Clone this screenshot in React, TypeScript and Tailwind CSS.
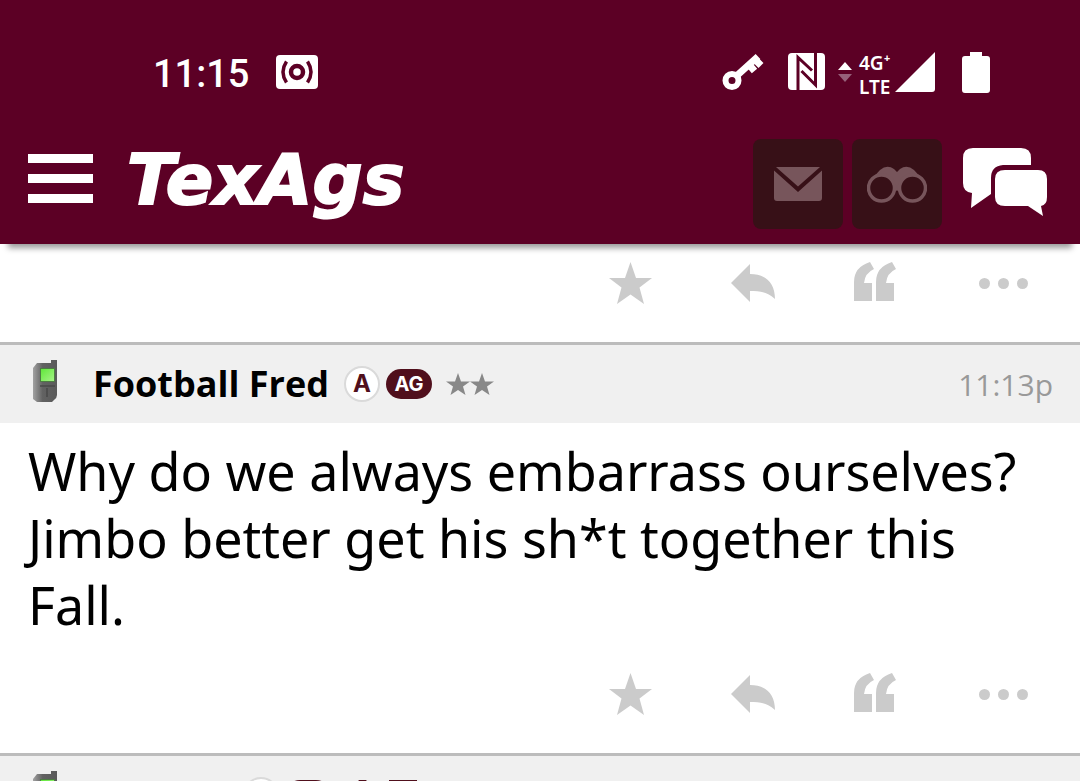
import type { ReactNode } from "react";

function HeaderTile({ label, children }: { label: string; children: ReactNode }) {
  return (
    <button
      type="button"
      aria-label={label}
      className="flex size-[90px] items-center justify-center rounded-lg bg-[#371017] text-[#77555b]"
    >
      {children}
    </button>
  );
}

function StatusBar() {
  return (
    <div className="flex h-[110px] items-end justify-between pr-[90px] pb-[14px] pl-[153px] text-white">
      <div className="flex h-[48px] items-center gap-[27px]">
        <span className="pt-1 font-[Roboto,sans-serif] text-[38px] leading-[44px] font-medium">
          11:15
        </span>
        <svg width="42" height="34" viewBox="0 0 42 34" fill="none" aria-hidden="true">
          <rect width="42" height="34" rx="4" fill="currentColor" />
          <circle cx="21" cy="17" r="6" stroke="#5c0025" strokeWidth="4.5" />
          <path
            d="M10.5 6.5Q3.500 17 10.500 27.500M31.500 6.500Q38.500 17 31.500 27.500"
            stroke="#5c0025"
            strokeWidth="3.5"
          />
        </svg>
      </div>

      <div className="flex h-[48px] items-center">
        <svg width="42" height="38" viewBox="0 0 42 38" fill="none" aria-hidden="true">
          <circle cx="10" cy="27.5" r="6.5" stroke="currentColor" strokeWidth="6" />
          <path
            d="M15 22.500L36 3.500M27 11.500l5.500 6.500M33 6.500l6 6"
            stroke="currentColor"
            strokeWidth="7"
          />
        </svg>
        <svg className="ml-[24px]" width="38" height="38" viewBox="0 0 38 38" aria-hidden="true">
          <rect width="37" height="37" rx="4" fill="currentColor" />
          <path
            d="M10 37V4.500L24 17.500M27.500 0V32L13.500 18"
            fill="none"
            stroke="#5c0025"
            strokeWidth="3"
          />
        </svg>
        <svg className="ml-[12px]" width="14" height="20" viewBox="0 0 14 20" aria-hidden="true">
          <path fill="currentColor" d="M7 0L14 8H0Z" />
          <path fill="#96607a" d="M0 12H14L7 20Z" />
        </svg>
        <div className="ml-[7px] w-[36px] pt-1.5 font-['Noto_Sans',sans-serif] text-[19px] leading-[24px] font-semibold">
          <div>4G⁺</div>
          <div>LTE</div>
        </div>
        <svg width="40" height="40" viewBox="0 0 40 40" aria-hidden="true">
          <path fill="currentColor" d="M40 0V37Q40 40 37 40H0Z" />
        </svg>
        <svg className="ml-[27px]" width="28" height="41" viewBox="0 0 28 41" aria-hidden="true">
          <path
            fill="currentColor"
            d="M8 0H20V4H25Q28 4 28 7V38Q28 41 25 41H3Q0 41 0 38V7Q0 4 3 4H8Z"
          />
        </svg>
      </div>
    </div>
  );
}

function SiteHeader() {
  return (
    <header className="relative z-10 shrink-0 bg-[#5c0025] shadow-[0_12px_6px_-8px_rgba(0,0,0,0.4)]">
      <StatusBar />
      <div className="flex h-[134px] items-center pt-[14px] pr-[33px] pl-7 text-white">
        <button type="button" aria-label="Menu" className="mb-3 flex flex-col gap-[11px]">
          <span className="h-[9px] w-[65px] bg-white" />
          <span className="h-[9px] w-[65px] bg-white" />
          <span className="h-[9px] w-[65px] bg-white" />
        </button>
        <a
          href="#"
          className="mb-2 ml-[34px] font-['DejaVu_Sans',sans-serif] text-[70px] leading-[80px] font-bold italic [-webkit-text-stroke:2px_white]"
        >
          TexAgs
        </a>
        <nav className="ml-auto flex items-center gap-[9px]">
          <HeaderTile label="Messages">
            <svg width="48" height="34" viewBox="0 0 48 34" fill="currentColor">
              <path d="M2 0H46L24 19.500Z" />
              <path d="M0 3.500L24 25L48 3.500V31Q48 34 45 34H3Q0 34 0 31Z" />
            </svg>
          </HeaderTile>
          <HeaderTile label="Watched topics">
            <svg width="60" height="37" viewBox="0 0 60 37">
              <path
                fill="currentColor"
                d="M3 15L13 4Q20 -2 27 3L30 6L33 3Q40 -2 47 4L57 15L44 26L33 26Q30 23 27 26L16 26Z"
              />
              <g fill="#371017" stroke="currentColor" strokeWidth="3.500">
                <circle cx="14.500" cy="22" r="13" />
                <circle cx="45.500" cy="22" r="13" />
              </g>
            </svg>
          </HeaderTile>
          <button type="button" aria-label="Forums" className="mb-1 ml-3">
            <svg width="84" height="69" viewBox="0 0 84 69" fill="currentColor">
              <path d="M10 0H58Q68 0 68 10V17H40Q28 18 28 30V46L8 60L9 45Q0 44 0 35V10Q0 0 10 0Z" />
              <path d="M42 22H75Q84 22 84 31V49Q84 57 78 58L80 68L65 58H42Q32 58 32 49V31Q32 22 42 22Z" />
            </svg>
          </button>
        </nav>
      </div>
    </header>
  );
}

function PostActions() {
  return (
    <div className="flex h-11 items-center justify-end gap-[79px] pr-[52px] text-[#cbcbcb]">
      <button type="button" aria-label="Star">
        <svg width="43" height="42" viewBox="0 0 43 42" fill="currentColor">
          <path d="M21.500 0L27 16H43L30.500 25.500L35 42L21.500 32.500L8 42L12.500 25.500L0 16H16Z" />
        </svg>
      </button>
      <button type="button" aria-label="Reply">
        <svg width="44" height="38" viewBox="0 0 44 38" fill="currentColor">
          <path d="M19 0V10C35 10 44 19 44 35C37 28 29 27 19 27V38L0 19Z" />
        </svg>
      </button>
      <button type="button" aria-label="Quote" className="mb-1">
        <svg width="46" height="39" viewBox="0 0 46 39" fill="currentColor">
          <path d="M16 0L20 7Q11 11 10 21H18V39H0V20Q0 5 16 0Z" />
          <path d="M38 0L42 7Q33 11 32 21H40V39H22V20Q22 5 38 0Z" />
        </svg>
      </button>
      <button type="button" aria-label="More" className="flex gap-2">
        <span className="size-[11px] rounded-full bg-[#cbcbcb]" />
        <span className="size-[11px] rounded-full bg-[#cbcbcb]" />
        <span className="size-[11px] rounded-full bg-[#cbcbcb]" />
      </button>
    </div>
  );
}

function PhoneIcon() {
  return (
    <svg width="26" height="44" viewBox="0 0 26 44" aria-hidden="true">
      <defs>
        <linearGradient id="phone-body" x1="0" x2="1">
          <stop offset="0" stopColor="#a2a2a2" />
          <stop offset="0.4" stopColor="#626262" />
          <stop offset="1" stopColor="#5a5a5a" />
        </linearGradient>
        <linearGradient id="phone-screen" x1="0" x2="1" y1="0" y2="1">
          <stop offset="0" stopColor="#61e83b" />
          <stop offset="1" stopColor="#a6f387" />
        </linearGradient>
      </defs>
      <path fill="url(#phone-body)" d="M5 4H19V1H25V36Q25 39 22 41L20 43H5L1 40V9Z" />
      <rect x="8" y="9" width="15" height="14" fill="#4c7d42" />
      <rect x="9" y="10" width="13" height="12" fill="url(#phone-screen)" />
      <path stroke="#484848" strokeWidth="1.5" d="M8 27H23M15 29V38" />
    </svg>
  );
}

function RatingStar() {
  return (
    <svg width="24" height="22" viewBox="0 0 24 22" fill="#888888" aria-hidden="true">
      <path d="M12 0L15 8.500H24L17 13.500L19.500 22L12 17L4.500 22L7 13.500L0 8.500H9Z" />
    </svg>
  );
}

function PostHeader({ name, time, children }: { name: ReactNode; time?: string; children: ReactNode }) {
  return (
    <div className="flex h-[81px] items-center border-t-[3px] border-[#bcbcbc] bg-[#f0f0f0] pr-[27px] pl-8">
      <div className="mb-1.5">
        <PhoneIcon />
      </div>
      <div className="ml-[35px]">{name}</div>
      <div className="ml-[15px] flex items-center gap-1.5">
        <span className="flex size-9 items-center justify-center rounded-full border-2 border-[#dadada] bg-white font-[Inter,sans-serif] text-[24px] leading-[30px] font-bold text-[#500f1c]">
          A
        </span>
        {children}
      </div>
      {time && <time className="ml-auto text-[30px] text-[#999999]">{time}</time>}
    </div>
  );
}

export default function App() {
  return (
    <div className="flex h-screen flex-col overflow-hidden bg-white font-['Open_Sans','Noto_Sans',sans-serif] text-black">
      <SiteHeader />
      <main className="min-h-0 flex-1 overflow-hidden">
        <div className="pt-[17px] pb-[37px]">
          <PostActions />
        </div>

        <article>
          <PostHeader
            name={<h2 className="text-[36px] leading-[44px] font-bold">Football Fred</h2>}
            time="11:13p"
          >
            <span className="flex h-[30px] w-[46px] items-center justify-center rounded-full bg-[#500f1c] font-[Inter,sans-serif] text-[20px] font-bold text-white">
              AG
            </span>
            <span className="ml-2 flex">
              <RatingStar />
              <RatingStar />
            </span>
          </PostHeader>
          <p className="pt-[14px] pr-8 pl-7 font-['Noto_Sans',sans-serif] text-[52px] leading-[67px]">
            Why do we always embarrass ourselves? Jimbo better get his sh*t together this Fall.
          </p>
          <div className="pt-[34px] pb-[37px]">
            <PostActions />
          </div>
        </article>

        <article>
          <PostHeader name={<div className="w-[135px]" />}>
            <span className="h-[30px] w-[46px] rounded-full bg-[#500f1c]" />
            <svg className="ml-2" width="38" height="30" viewBox="0 0 38 30" aria-hidden="true">
              <path fill="#500f1c" d="M14 0H21L34 15L18 30L2 15Z" />
            </svg>
            <span className="h-[30px] w-7 bg-[#500f1c]" />
          </PostHeader>
        </article>
      </main>
    </div>
  );
}
